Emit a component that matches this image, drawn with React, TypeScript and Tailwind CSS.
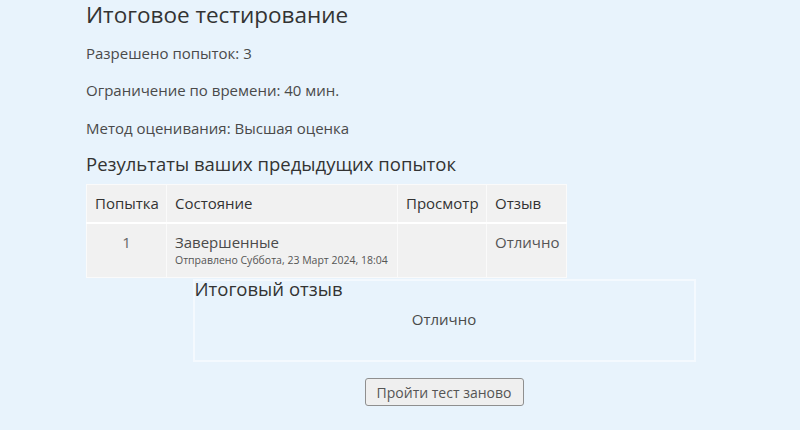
import React from 'react';

const attempts = [
  { n: 1, state: 'Завершенные', sent: 'Отправлено Суббота, 23 Март 2024, 18:04', review: '', feedback: 'Отлично' },
];

export default function App() {
  return (
    <div className="min-h-screen w-[800px] h-[430px] overflow-hidden bg-[#e8f3fc] text-[#333] font-['Open_Sans',sans-serif]">
      <div className="pl-[86px]">
        <h2 className="text-[22.5px] leading-[30px] font-normal">Итоговое тестирование</h2>
        <div className="text-[15px] text-[#4a4a4a]">
          <p className="mt-[8px] leading-[30px]">Разрешено попыток: 3</p>
          <p className="mt-[7px] leading-[30px]">Ограничение по времени: 40 мин.</p>
          <p className="mt-[8px] leading-[30px]">Метод оценивания: Высшая оценка</p>
        </div>
        <h3 className="mt-[8px] mb-[7px] text-[18.5px] leading-[26px] font-normal">Результаты ваших предыдущих попыток</h3>

        <table className="table-fixed border-collapse text-[15px] bg-[#f1f1f1] w-[481px]">
          <thead>
            <tr className="h-[38px]">
              <th className="border border-[#fafafa] border-b-2 border-b-white font-normal text-left px-2 w-[80px]">Попытка</th>
              <th className="border border-[#fafafa] border-b-2 border-b-white font-normal text-left px-2 w-[231px]">Состояние</th>
              <th className="border border-[#fafafa] border-b-2 border-b-white font-normal text-left px-2 w-[89px]">Просмотр</th>
              <th className="border border-[#fafafa] border-b-2 border-b-white font-normal text-left px-2">Отзыв</th>
            </tr>
          </thead>
          <tbody>
            {attempts.map(a => (
              <tr key={a.n} className="h-[55px] align-top text-[#4a4a4a]">
                <td className="border border-[#fafafa] text-center px-2 pt-[7px] text-[#666]">{a.n}</td>
                <td className="border border-[#fafafa] px-2 pt-[7px]">
                  <div className="leading-[22px]">{a.state}</div>
                  <div className="text-[10.5px] leading-[14px] text-[#555]">{a.sent}</div>
                </td>
                <td className="border border-[#fafafa] px-2">{a.review}</td>
                <td className="border border-[#fafafa] px-2 pt-[7px] text-[#555]">{a.feedback}</td>
              </tr>
            ))}
          </tbody>
        </table>

        <div className="flex flex-col items-center w-[716px]">
          <div className="mt-[1px] w-[503px] h-[83px] border-2 border-[#f4f9fe]">
            <h3 className="text-[18.5px] leading-[16px] font-normal">Итоговый отзыв</h3>
            <p className="text-center text-[15px] leading-[20px] mt-[12px] text-[#4a4a4a]">Отлично</p>
          </div>
          <button className="mt-[16px] w-[159px] h-[28px] rounded-[3px] border border-[#8f8f8f] bg-[#efefef] text-[14px] text-[#555]">
            Пройти тест заново
          </button>
        </div>
      </div>
    </div>
  );
}
